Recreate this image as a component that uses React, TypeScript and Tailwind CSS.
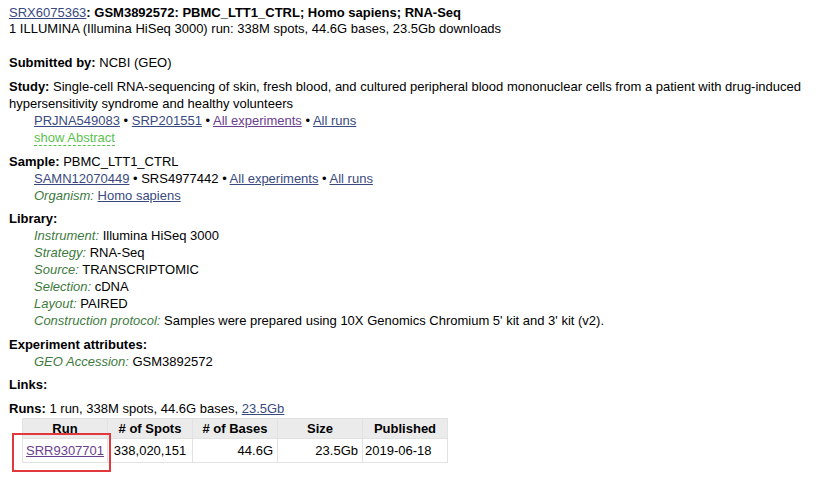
import React from "react";

const blue = "text-[#3a4a80] underline";
const purple = "text-[#6b3d8f] underline";
const lab = "italic text-[#3d7a3d]";

export default function App() {
  return (
    <div className="min-h-[487px] w-[831px] bg-white pl-[9px] pt-[5px] text-[13px] leading-[17px] text-black" style={{ fontFamily: '"Liberation Sans", Arial, sans-serif' }}>
      <div className="leading-[16px]">
        <span className={blue}>SRX6075363</span>
        <b>: GSM3892572: PBMC_LTT1_CTRL; Homo sapiens; RNA-Seq</b>
      </div>
      <div className="leading-[16px]">1 ILLUMINA (Illumina HiSeq 3000) run: 338M spots, 44.6G bases, 23.5Gb downloads</div>

      <div className="mt-[17px]">
        <b>Submitted by:</b> NCBI (GEO)
      </div>

      <div className="mt-[7px]">
        <div>
          <b>Study:</b> Single-cell RNA-sequencing of skin, fresh blood, and cultured peripheral blood mononuclear cells from a patient with drug-induced hypersensitivity syndrome and healthy volunteers
        </div>
        <div className="pl-[25px]">
          <span className={blue}>PRJNA549083</span> • <span className={blue}>SRP201551</span> • <span className={purple}>All experiments</span> • <span className={blue}>All runs</span>
        </div>
        <div className="pl-[25px]">
          <span className="border-b border-dashed border-[#5cbf4f] text-[#5cbf4f]">show Abstract</span>
        </div>
      </div>

      <div className="mt-[7px]">
        <div>
          <b>Sample:</b> PBMC_LTT1_CTRL
        </div>
        <div className="pl-[25px]">
          <span className={blue}>SAMN12070449</span> • SRS4977442 • <span className={blue}>All experiments</span> • <span className={blue}>All runs</span>
        </div>
        <div className="pl-[25px]">
          <span className={lab}>Organism:</span> <span className={blue}>Homo sapiens</span>
        </div>
      </div>

      <div className="mt-[6px]">
        <div>
          <b>Library:</b>
        </div>
        <div className="pl-[25px]">
          <div><span className={lab}>Instrument:</span> Illumina HiSeq 3000</div>
          <div><span className={lab}>Strategy:</span> RNA-Seq</div>
          <div><span className={lab}>Source:</span> TRANSCRIPTOMIC</div>
          <div><span className={lab}>Selection:</span> cDNA</div>
          <div><span className={lab}>Layout:</span> PAIRED</div>
          <div><span className={lab}>Construction protocol:</span> Samples were prepared using 10X Genomics Chromium 5' kit and 3' kit (v2).</div>
        </div>
      </div>

      <div className="mt-[7px]">
        <div><b>Experiment attributes:</b></div>
        <div className="pl-[25px]">
          <span className={lab}>GEO Accession:</span> GSM3892572
        </div>
      </div>

      <div className="mt-[6px]">
        <b>Links:</b>
      </div>

      <div className="mt-[7px]">
        <div>
          <b>Runs:</b> 1 run, 338M spots, 44.6G bases, <span className={blue}>23.5Gb</span>
        </div>
        <div className="relative ml-[13px] mt-[1px] w-fit">
          <table className="border-collapse">
            <thead>
              <tr className="bg-[#ebebeb]">
                <th className="h-[20px] w-[85px] border border-[#e2e2e2] p-0 text-center font-bold">Run</th>
                <th className="h-[20px] w-[85px] border border-[#e2e2e2] p-0 text-center font-bold"># of Spots</th>
                <th className="h-[20px] w-[85px] border border-[#e2e2e2] p-0 text-center font-bold"># of Bases</th>
                <th className="h-[20px] w-[85px] border border-[#e2e2e2] p-0 text-center font-bold">Size</th>
                <th className="h-[20px] w-[85px] border border-[#e2e2e2] p-0 text-center font-bold">Published</th>
              </tr>
            </thead>
            <tbody>
              <tr>
                <td className="h-[24px] border border-[#e2e2e2] p-0 text-center"><span className={purple}>SRR9307701</span></td>
                <td className="h-[24px] border border-[#e2e2e2] p-0 text-center">338,020,151</td>
                <td className="h-[24px] border border-[#e2e2e2] p-0 pr-[4px] text-right">44.6G</td>
                <td className="h-[24px] border border-[#e2e2e2] p-0 pr-[4px] text-right">23.5Gb</td>
                <td className="h-[24px] border border-[#e2e2e2] p-0 pl-[2px] text-left">2019-06-18</td>
              </tr>
            </tbody>
          </table>
          <div className="pointer-events-none absolute left-[-10px] top-[15px] h-[39px] w-[99px] border-2 border-[#e0383c]" />
        </div>
      </div>
    </div>
  );
}
